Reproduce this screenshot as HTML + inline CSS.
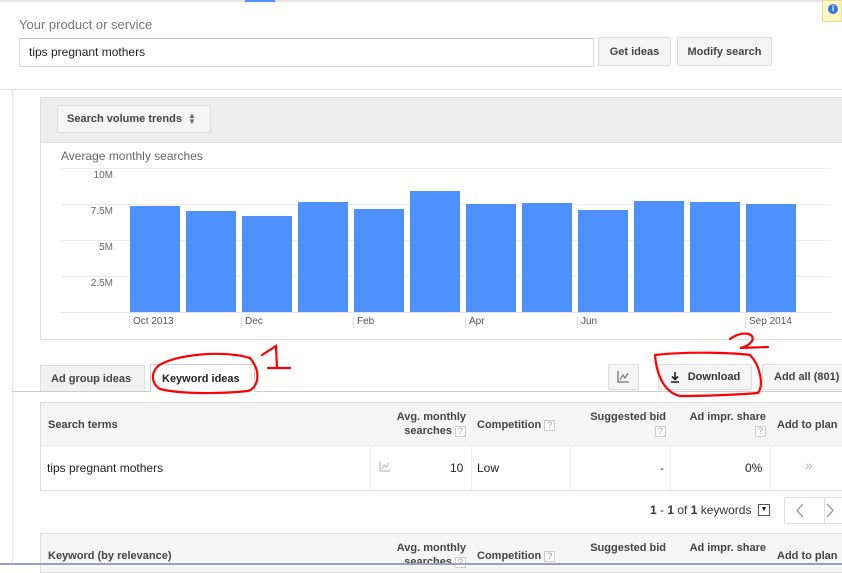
<!DOCTYPE html>
<html><head><meta charset="utf-8"><style>
*{margin:0;padding:0;box-sizing:border-box}
body{width:842px;height:565px;overflow:hidden;background:#fff;font-family:"Liberation Sans",Arial,sans-serif;position:relative;color:#222}
.a{position:absolute}
.btn{position:absolute;background:#f5f5f5;border:1px solid #dcdcdc;border-radius:2px;font-size:11px;font-weight:bold;color:#444;display:flex;align-items:center;justify-content:center}
.bar{position:absolute;background:#4d90fe;width:50px}
.gl{position:absolute;left:61px;width:770px;height:1px;background:#ebebeb}
.yl{position:absolute;font-size:10px;color:#666;width:53px;text-align:right;left:60px}
.xl{position:absolute;font-size:10px;color:#555;top:316px;border-left:1px solid #ddd;padding-left:3px;height:12px;line-height:11px}
.th{position:absolute;font-size:11px;font-weight:bold;color:#444;line-height:14px}
.q{display:inline-block;width:11px;height:11px;border:1px solid #ccc;font-size:9px;color:#999;text-align:center;line-height:9px;font-weight:normal;background:#fff}
</style></head><body>
<div class="a" style="left:0;top:0;width:842px;height:2px;background:#e5e5e5"></div>
<div class="a" style="left:245px;top:0;width:30px;height:2px;background:#4d90fe"></div>
<div class="a" style="left:822px;top:0;width:20px;height:22px;background:#fff8c4;border:1px solid #e8dd9a"></div>
<div class="a" style="left:828px;top:4px;width:10px;height:10px;border-radius:5px;background:#3a78e0;color:#fff;font-size:8px;font-weight:bold;text-align:center;line-height:10px">i</div>
<div class="a" style="left:19px;top:17px;font-size:13px;color:#777">Your product or service</div>
<div class="a" style="left:19px;top:38px;width:575px;height:29px;border:1px solid #d9d9d9;border-top-color:#c0c0c0;font-size:12px;padding:6px 0 0 9px">tips pregnant mothers</div>
<div class="btn" style="left:598px;top:37px;width:73px;height:29px">Get ideas</div>
<div class="btn" style="left:677px;top:37px;width:95px;height:29px">Modify search</div>
<div class="a" style="left:0;top:89px;width:842px;height:1px;background:#e0e0e0"></div>
<div class="a" style="left:12px;top:90px;width:1px;height:475px;background:#e5e5e5"></div>
<div class="a" style="left:40px;top:97px;width:802px;height:243px;border:1px solid #dcdcdc;border-right:none"></div>
<div class="a" style="left:41px;top:98px;width:801px;height:45px;background:#eee;border-bottom:1px solid #ddd"></div>
<div class="btn" style="left:57px;top:105px;width:154px;height:28px;justify-content:flex-start;padding-left:9px">Search volume trends <span style="font-size:8px;margin-left:6px;line-height:6px;color:#666">▲<br>▼</span></div>
<div class="a" style="left:61px;top:149px;font-size:12px;color:#666">Average monthly searches</div>
<div class="gl" style="top:168px"></div><div class="gl" style="top:204px"></div><div class="gl" style="top:240px"></div><div class="gl" style="top:276px"></div><div class="gl" style="top:312px;background:#e2e2e2"></div>
<div class="yl" style="top:170px">10M</div><div class="yl" style="top:206px">7.5M</div><div class="yl" style="top:242px">5M</div><div class="yl" style="top:278px">2.5M</div>
<div class="bar" style="left:130px;top:206px;height:106px"></div>
<div class="bar" style="left:186px;top:211px;height:101px"></div>
<div class="bar" style="left:242px;top:216px;height:96px"></div>
<div class="bar" style="left:298px;top:202px;height:110px"></div>
<div class="bar" style="left:354px;top:209px;height:103px"></div>
<div class="bar" style="left:410px;top:191px;height:121px"></div>
<div class="bar" style="left:466px;top:204px;height:108px"></div>
<div class="bar" style="left:522px;top:203px;height:109px"></div>
<div class="bar" style="left:578px;top:210px;height:102px"></div>
<div class="bar" style="left:634px;top:201px;height:111px"></div>
<div class="bar" style="left:690px;top:202px;height:110px"></div>
<div class="bar" style="left:746px;top:204px;height:108px"></div>
<div class="xl" style="left:129px">Oct 2013</div><div class="xl" style="left:241px">Dec</div><div class="xl" style="left:353px">Feb</div><div class="xl" style="left:465px">Apr</div><div class="xl" style="left:577px">Jun</div><div class="xl" style="left:745px">Sep 2014</div>
<div class="a" style="left:12px;top:391px;width:830px;height:1px;background:#ccc"></div>
<div class="a" style="left:40px;top:365px;width:105px;height:26px;background:#f1f1f1;border:1px solid #ddd;border-bottom:none;font-size:11px;font-weight:bold;color:#444;padding:7px 0 0 10px">Ad group ideas</div>
<div class="a" style="left:150px;top:364px;width:105px;height:28px;background:#fff;border:1px solid #ccc;border-bottom:none;font-size:11px;font-weight:bold;color:#222;padding:8px 0 0 11px">Keyword ideas</div>
<div class="btn" style="left:608px;top:364px;width:31px;height:26px"><svg width="13" height="12" viewBox="0 0 13 12"><path d="M1 0V11H12" fill="none" stroke="#777" stroke-width="1.3"/><path d="M3 9L6 4L8 7L11 2" fill="none" stroke="#777" stroke-width="1.2"/></svg></div>
<div class="btn" style="left:658px;top:364px;width:94px;height:26px;color:#333"><svg width="10" height="11" viewBox="0 0 10 11" style="margin-right:8px"><path d="M5 0V7M2 4.5L5 7.5L8 4.5M1 10H9" fill="none" stroke="#222" stroke-width="1.6"/></svg>Download</div>
<div class="btn" style="left:762px;top:364px;width:85px;height:26px;justify-content:flex-start;padding-left:11px">Add all (801)</div>
<svg class="a" style="left:0;top:330px" width="842" height="80" viewBox="0 330 842 80">
<g fill="none" stroke="#f00" stroke-width="2.2" stroke-linecap="round">
<path d="M158 366 C175 354 225 350 250 358 C262 372 258 388 248 391 C220 394 180 394 160 389 C152 384 150 374 158 366"/>
<path d="M262 355 L276 346 L277 368 M268 368 L290 368"/>
<path d="M655 355 C690 351 735 353 750 355 C760 365 764 385 758 393 C735 395 700 396 680 396 C662 392 656 370 655 355"/>
<path d="M730 339 C740 331 756 332 752 341 C748 346 745 347 740 348 L768 347"/>
</g></svg>
<div class="a" style="left:40px;top:402px;width:802px;height:89px;border:1px solid #ddd;border-right:none"></div>
<div class="a" style="left:41px;top:403px;width:801px;height:43px;background:#f5f5f5;border-bottom:1px solid #e5e5e5"></div>
<div class="th" style="left:48px;top:418px">Search terms</div>
<div class="th" style="left:380px;top:410px;width:86px;text-align:right">Avg. monthly<br>searches <span class="q">?</span></div>
<div class="th" style="left:477px;top:418px">Competition <span class="q">?</span></div>
<div class="th" style="left:570px;top:410px;width:96px;text-align:right">Suggested bid<br><span class="q">?</span></div>
<div class="th" style="left:670px;top:410px;width:96px;text-align:right">Ad impr. share<br><span class="q">?</span></div>
<div class="th" style="left:777px;top:418px">Add to plan</div>
<div class="a" style="left:370px;top:446px;width:1px;height:44px;background:#eee"></div>
<div class="a" style="left:471px;top:446px;width:1px;height:44px;background:#eee"></div>
<div class="a" style="left:570px;top:446px;width:1px;height:44px;background:#eee"></div>
<div class="a" style="left:670px;top:446px;width:1px;height:44px;background:#eee"></div>
<div class="a" style="left:770px;top:446px;width:1px;height:44px;background:#eee"></div>
<div class="a" style="left:47px;top:461px;font-size:12px">tips pregnant mothers</div>
<svg class="a" style="left:379px;top:461px" width="12" height="11" viewBox="0 0 12 11"><path d="M1 0V10H11" fill="none" stroke="#bbb" stroke-width="1.2"/><path d="M3 8L5.5 4L7.5 6L10 2" fill="none" stroke="#bbb" stroke-width="1"/></svg>
<div class="a" style="left:450px;top:461px;font-size:12px">10</div>
<div class="a" style="left:477px;top:461px;font-size:12px">Low</div>
<div class="a" style="left:660px;top:461px;font-size:12px">-</div>
<div class="a" style="left:745px;top:461px;font-size:12px">0%</div>
<div class="a" style="left:805px;top:457px;font-size:14px;color:#bbb">»</div>
<div class="a" style="left:650px;top:503px;font-size:12px;color:#333"><b>1</b> - <b>1</b> of <b>1</b> keywords</div>
<div class="a" style="left:758px;top:504px;width:12px;height:12px;border:1px solid #555;font-size:7px;text-align:center;line-height:10px">▼</div>
<div class="a" style="left:784px;top:497px;width:70px;height:27px;border:1px solid #ddd;border-radius:2px"></div>
<svg class="a" style="left:795px;top:503px" width="40" height="15" viewBox="0 0 40 15"><path d="M8 1L2 7.5L8 14" fill="none" stroke="#999" stroke-width="1.3"/><path d="M32 1L38 7.5L32 14" fill="none" stroke="#999" stroke-width="1.3"/></svg>
<div class="a" style="left:824px;top:497px;width:1px;height:27px;background:#ddd"></div>
<div class="a" style="left:40px;top:533px;width:802px;height:40px;border:1px solid #ddd;background:#f5f5f5;border-right:none"></div>
<div class="th" style="left:48px;top:549px">Keyword (by relevance)</div>
<div class="th" style="left:380px;top:541px;width:86px;text-align:right">Avg. monthly<br>searches <span class="q">?</span></div>
<div class="th" style="left:477px;top:549px">Competition <span class="q">?</span></div>
<div class="th" style="left:570px;top:541px;width:96px;text-align:right">Suggested bid</div>
<div class="th" style="left:670px;top:541px;width:96px;text-align:right">Ad impr. share</div>
<div class="th" style="left:777px;top:549px">Add to plan</div>
<div class="a" style="left:0;top:563px;width:842px;height:2px;background:#9aa0b8"></div>
</body></html>
